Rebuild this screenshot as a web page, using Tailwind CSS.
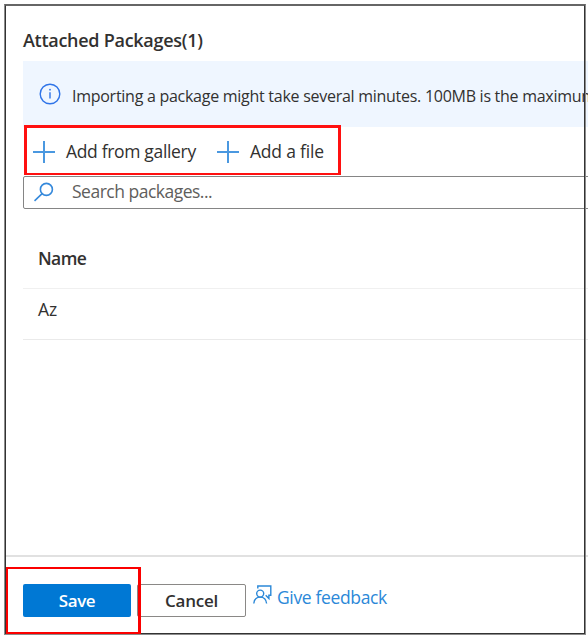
<!DOCTYPE html>
<html lang="en">
<head>
<meta charset="utf-8">
<title>Attached Packages</title>
<script src="https://cdn.jsdelivr.net/npm/@tailwindcss/browser@4"></script>
</head>
<body class="bg-white font-['Open_Sans','Noto_Sans',sans-serif] text-[#323130]">
<div class="relative flex h-[639px] w-[588px] flex-col overflow-hidden whitespace-nowrap pt-[28px]">
  <main class="flex flex-col pl-[23px]">
    <h1 class="h-[33px] text-[18px] font-semibold leading-[24px] tracking-[-0.28px]">Attached Packages(1)</h1>
    <div class="flex h-[66px] items-center bg-[#eff6ff] pl-[16px]">
      <svg class="mb-[1px] size-[22px] shrink-0" viewBox="0 0 22 22" fill="none" stroke="#2f74e8" stroke-width="1.4"><circle cx="11" cy="11" r="9.8"/><path d="M11 9.2v6.2"/><circle cx="11" cy="6.7" r=".9" fill="#2f74e8" stroke="none"/></svg>
      <span class="ml-[11px] mt-[3px] text-[16px] tracking-[-0.27px]">Importing a package might take several minutes. 100MB is the maximum</span>
    </div>
    <div class="flex h-[49px] items-center pl-[10px] text-[17.5px]">
      <svg class="size-[22px]" viewBox="0 0 22 22" stroke="#4a98e0" stroke-width="2"><path d="M11 0v22M0 11h22"/></svg>
      <span class="ml-[11px] w-[130px] tracking-[-0.33px]">Add from gallery</span>
      <svg class="ml-[21px] size-[22px]" viewBox="0 0 22 22" stroke="#4a98e0" stroke-width="2"><path d="M11 0v22M0 11h22"/></svg>
      <span class="ml-[11px] tracking-[-0.2px]">Add a file</span>
    </div>
    <div class="-mr-2 flex h-[33px] items-center rounded-[2px] border border-[#858585] pb-[2px] pl-[10px] text-[17.5px] text-[#605e5c]">
      <svg class="size-[20px]" viewBox="0 0 20 20" fill="none" stroke="#3488db" stroke-width="1.6"><circle cx="12.4" cy="7.4" r="6"/><path d="M8.1 11.7L.5 18.9"/></svg>
      <span class="ml-[18px] tracking-[-0.5px]">Search packages...</span>
    </div>
    <div class="mt-[28px] flex h-[52px] items-center border-b border-[#f0f0f0] pb-[9px] pl-[15px] text-[17.5px] font-semibold tracking-[-0.6px]">Name</div>
    <div class="flex h-[51px] items-center border-b border-[#eaeaea] pb-[9px] pl-[15px] text-[17.5px]">Az</div>
  </main>
  <footer class="ml-[6px] mt-[215px] flex h-[84px] border-t-2 border-[#e1e1e1] pl-[17px] pt-[27px]">
    <button class="h-[33px] w-[108px] rounded-[2px] bg-[#0078d4] text-[17px] font-semibold tracking-[-0.4px] text-white">Save</button>
    <button class="ml-[6px] h-[33px] w-[109px] rounded-[2px] border border-[#8a8886] text-[17px] font-semibold tracking-[-0.2px]">Cancel</button>
    <a class="ml-[7px] flex h-[26px] items-center text-[17.5px] tracking-[-0.35px] text-[#2b88d8]">
      <svg class="mb-[5px] size-[19px]" viewBox="0 0 19 19" fill="none" stroke="#2b88d8" stroke-width="1.4"><path d="M4.8 3.6V1h13v9.3h-1.9v3.2l-3.2-3.2"/><circle cx="7.2" cy="8.6" r="3.5"/><path d="M.8 18.5c.4-4 3-6.4 6.4-6.4s6 2.4 6.4 6.4"/></svg>
      <span class="ml-[5px]">Give feedback</span>
    </a>
  </footer>
  <div class="pointer-events-none absolute left-[4px] top-[4px] h-[631px] w-[582px] border border-[#8c8c8c] border-t-[#666]">
    <div class="h-full border border-[#333] border-t-[#666]"></div>
  </div>
  <div class="pointer-events-none absolute left-[24px] top-[125px] h-[50px] w-[317px] border-x-[3px] border-b-2 border-t-[3px] border-[#ff1010]"></div>
  <div class="pointer-events-none absolute left-[6px] top-[567px] h-[67px] w-[135px] border-2 border-r-[3px] border-[#fb0000]"></div>
</div>
</body>
</html>
